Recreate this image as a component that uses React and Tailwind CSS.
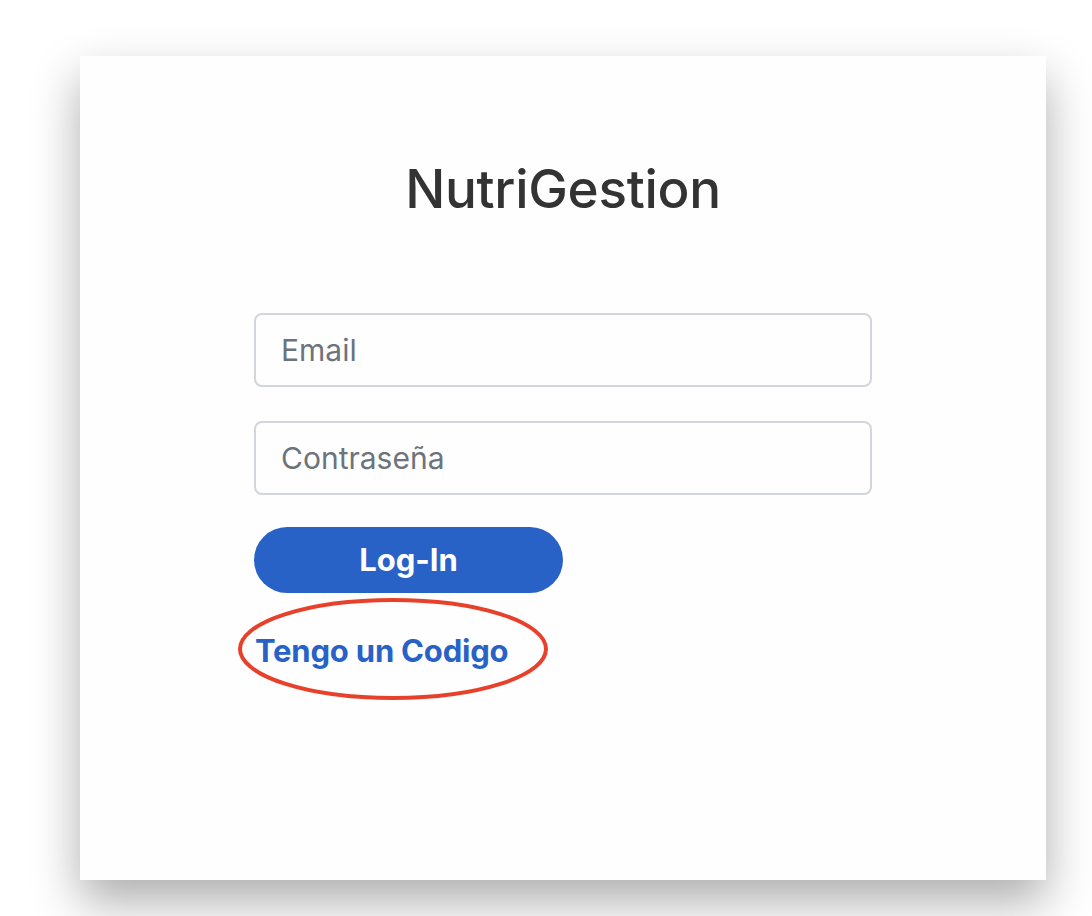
import { useState } from 'react';

export default function App() {
  const [email, setEmail] = useState('');
  const [password, setPassword] = useState('');

  return (
    <div className="min-h-screen bg-white font-['Inter','Liberation_Sans',sans-serif] pt-[56px] pl-[80px]">
      <div className="w-[966px] h-[824px] bg-[#fefefe] shadow-[0_22px_45px_rgba(0,0,0,0.32)] flex flex-col items-center">
        <h1 className="mt-[98px] text-[53px] leading-[70px] font-medium text-[#333333] tracking-[-0.3px]">
          NutriGestion
        </h1>

        <form className="mt-[89px] w-[618px] flex flex-col" onSubmit={(e) => e.preventDefault()}>
          <input
            type="email"
            placeholder="Email"
            value={email}
            onChange={(e) => setEmail(e.target.value)}
            className="h-[74px] w-full rounded-[8px] border-2 border-[#d2d5d9] px-[25px] text-[30px] text-[#333] placeholder:text-[#6c737b] outline-none"
          />
          <input
            type="password"
            placeholder="Contraseña"
            value={password}
            onChange={(e) => setPassword(e.target.value)}
            className="mt-[34px] h-[74px] w-full rounded-[8px] border-2 border-[#d2d5d9] px-[25px] text-[30px] text-[#333] placeholder:text-[#6c737b] outline-none"
          />
          <button
            type="submit"
            className="mt-[32px] h-[66px] w-[309px] rounded-full bg-[#2962c7] text-white text-[31px] font-bold"
          >
            Log-In
          </button>

          <div className="relative mt-[39px] self-start">
            <a href="#" className="block pl-[1px] text-[31px] leading-[38px] font-bold text-[#2962c7] tracking-[-0.2px]">
              Tengo un Codigo
            </a>
            <svg
              className="absolute left-[-17px] top-[-35px] pointer-events-none"
              width="312"
              height="104"
              viewBox="0 0 312 104"
            >
              <ellipse cx="156" cy="52" rx="153" ry="49" fill="none" stroke="#e8412b" strokeWidth="4" />
            </svg>
          </div>
        </form>
      </div>
    </div>
  );
}
